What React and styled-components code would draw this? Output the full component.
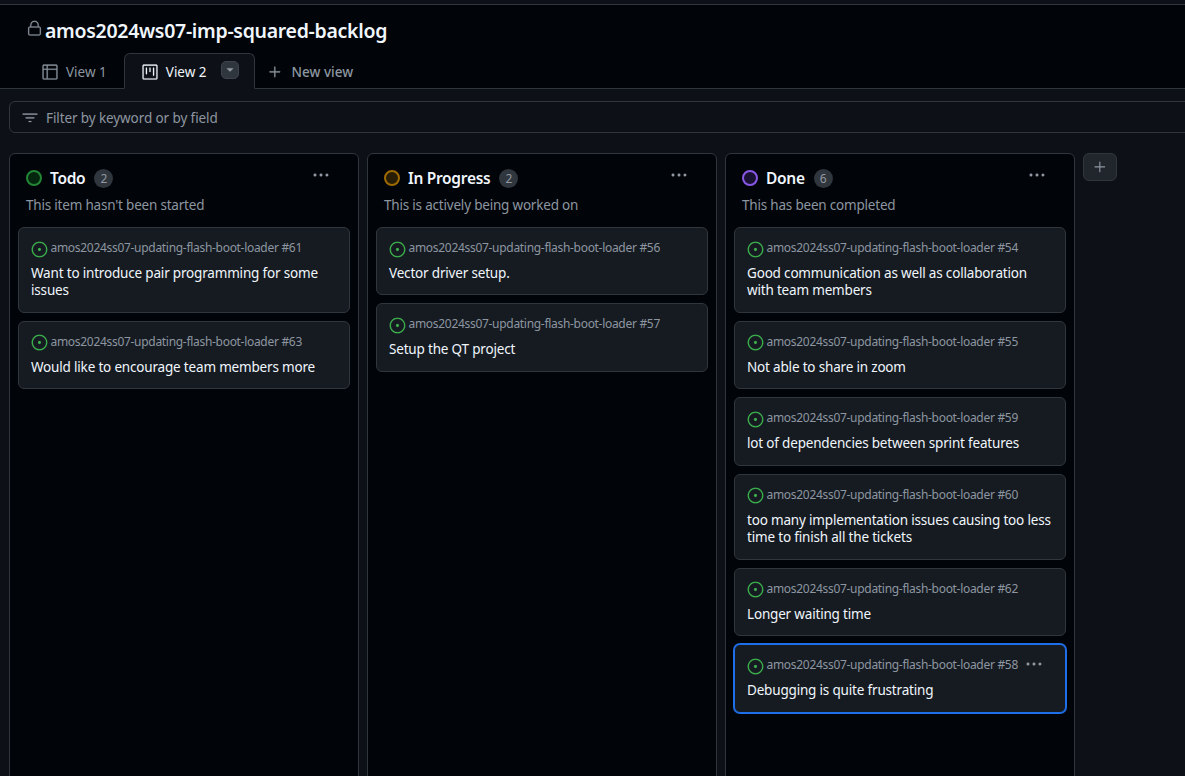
import React from 'react';
import styled, { createGlobalStyle } from 'styled-components';
import { GoLock, GoTable, GoProject, GoTriangleDown, GoPlus, GoKebabHorizontal, GoFilter, GoIssueOpened } from 'react-icons/go';

const Global = createGlobalStyle`
  html, body { margin: 0; padding: 0; height: 776px; overflow: hidden; background: #0d1117; }
  body { font-family: "Noto Sans", "Open Sans", sans-serif; color: #e6edf3; }
`;
const Page = styled.div`width: 1185px; height: 776px; overflow: hidden; display: flex; flex-direction: column;`;
const Header = styled.header`
  box-sizing: border-box; background: #010409; margin-top: 4px; height: 85px;
  border-top: 1px solid #30363d; border-bottom: 1px solid #30363d;
  display: flex; flex-direction: column; padding-left: 26px; flex: none;
  svg { stroke: currentColor; stroke-width: 0.3px; }
`;
const TitleRow = styled.div`display: flex; align-items: center; height: 50px; gap: 2px; padding-top: 1px; box-sizing: border-box; color: #8d96a0;
  svg { margin-top: -3px; }
`;
const Title = styled.h1`margin: 0; font-size: 19.5px; font-weight: 600; color: #f0f6fc; letter-spacing: -0.3px;`;
const Tabs = styled.nav`display: flex; align-items: stretch; height: 35px; margin-top: -1px; margin-left: -4px;`;
const Tab = styled.div`
  display: flex; align-items: center; gap: 7px; font-size: 13.5px; box-sizing: border-box; height: 36px; padding-top: 1px;
  padding-left: 19px; padding-right: 17px; color: #8d96a0;
  ${p => p.$active && `background:#0d1117;border:1px solid #30363d;border-bottom-color:#0d1117;border-radius:6px 6px 0 0;color:#f0f6fc;padding-left:16px;padding-right:15px;`}
  ${p => p.$new && 'font-weight:500;padding-left:11px;gap:8px;'}
`;
const TabCaret = styled.span`
  width: 18px; height: 18px; border-radius: 5px; background: #30363d; border: 1px solid #3d444d; box-sizing: border-box;
  display: flex; align-items: center; justify-content: center; color: #9198a1; margin-left: 7px; margin-top: -3px;
`;
const FilterBar = styled.div`
  margin: 12px -20px 0 9px; height: 32px; box-sizing: border-box; flex: none;
  border: 1px solid #30363d; border-radius: 6px; display: flex; align-items: center; gap: 7px;
  padding: 1px 0 0 11px; font-size: 13.5px; color: #8d96a0; letter-spacing: -0.1px;
  svg { stroke: currentColor; stroke-width: 0.3px; }
`;
const Board = styled.main`display: flex; gap: 8px; padding: 20px 0 0 9px; align-items: flex-start;`;
const Column = styled.section`
  width: 350px; height: 700px; box-sizing: border-box; flex: none; background: #010409;
  border: 1px solid #30363d; border-radius: 6px; padding: 0 8px;
`;
const ColumnHead = styled.div`display: flex; align-items: center; height: 42px; box-sizing: border-box; padding: 6px 0 0 8px;`;
const Status = styled.span`
  width: 16px; height: 16px; box-sizing: border-box; border-radius: 50%; flex: none;
  border: 2px solid ${p => p.$c}; background: ${p => p.$bg}; margin-right: 8px;
`;
const ColumnTitle = styled.h2`margin: 0; font-size: 15.5px; font-weight: 600; color: #f0f6fc; letter-spacing: -0.3px;`;
const Count = styled.span`
  width: 19px; height: 19px; border-radius: 50%; background: #30363d; color: #9198a1;
  font-size: 12px; display: flex; align-items: center; justify-content: center; margin-left: 9px;
`;
const Kebab = styled.span`margin-left: auto; margin-right: 20px; margin-top: -6px; color: #9198a1; display: flex;`;
const Desc = styled.p`margin: 0 0 13px 8px; font-size: 13.5px; line-height: 18px; color: #8d96a0; letter-spacing: -0.2px;`;
const Cards = styled.div`display: flex; flex-direction: column; gap: 8px;`;
const Card = styled.article`
  background: #161b22; border: 1px solid #30363d; border-radius: 6px; box-sizing: border-box;
  padding: 9px 10px 12.2px 12px; width: 332px;
  ${p => p.$focus && 'border-color:#1f6feb;box-shadow:0 0 0 1px #1f6feb;'}
`;
const Meta = styled.div`display: flex; align-items: center; height: 24px; gap: 3px; font-size: 12px; color: #8d96a0; margin-bottom: 3.75px; white-space: nowrap; letter-spacing: -0.3px;
  & > svg { flex: none; margin-left: -0.5px; stroke: #3fb950; stroke-width: 0.3px; }
`;
const MetaText = styled.span`margin-top: -3px;`;
const CardTitle = styled.div`font-size: 13.5px; line-height: 17.5px; color: #f0f6fc; letter-spacing: -0.18px;`;
const CardKebab = styled.span`margin-left: 4px; color: #9198a1; display: flex; flex: none; margin-top: -4px;`;
const AddColumn = styled.button`
  width: 34px; height: 28px; padding: 0; background: #21262d; border: 1px solid #30363d; border-radius: 6px;
  color: #8d96a0; display: flex; align-items: center; justify-content: center;
`;

const columns = [
  { name: 'Todo', c: '#238636', bg: '#04260f', desc: "This item hasn't been started", cards: [
    [61, 'Want to introduce pair programming for some issues'],
    [63, 'Would like to encourage team members more'],
  ]},
  { name: 'In Progress', c: '#9e6a03', bg: '#271d04', desc: 'This is actively being worked on', cards: [
    [56, 'Vector driver setup.'],
    [57, 'Setup the QT project'],
  ]},
  { name: 'Done', c: '#8957e5', bg: '#1a1233', desc: 'This has been completed', cards: [
    [54, 'Good communication as well as collaboration with team members'],
    [55, 'Not able to share in zoom'],
    [59, 'lot of dependencies between sprint features'],
    [60, 'too many implementation issues causing too less time to finish all the tickets'],
    [62, 'Longer waiting time'],
    [58, 'Debugging is quite frustrating', true],
  ]},
];

export default function App() {
  return (
    <Page>
      <Global />
      <Header>
        <TitleRow><GoLock size={17} /><Title>amos2024ws07-imp-squared-backlog</Title></TitleRow>
        <Tabs>
          <Tab><GoTable size={18} />View 1</Tab>
          <Tab $active><GoProject size={18} />View 2<TabCaret><GoTriangleDown size={12} /></TabCaret></Tab>
          <Tab $new><GoPlus size={18} />New view</Tab>
        </Tabs>
      </Header>
      <FilterBar><GoFilter size={18} />Filter by keyword or by field</FilterBar>
      <Board>
        {columns.map(col => (
          <Column key={col.name}>
            <ColumnHead>
              <Status $c={col.c} $bg={col.bg} />
              <ColumnTitle>{col.name}</ColumnTitle>
              <Count>{col.cards.length}</Count>
              <Kebab><GoKebabHorizontal size={18} /></Kebab>
            </ColumnHead>
            <Desc>{col.desc}</Desc>
            <Cards>
              {col.cards.map(([n, t, focus]) => (
                <Card key={n} $focus={focus}>
                  <Meta>
                    <GoIssueOpened size={17} color="#3fb950" />
                    <MetaText>amos2024ss07-updating-flash-boot-loader #{n}</MetaText>
                    {focus && <CardKebab><GoKebabHorizontal size={18} /></CardKebab>}
                  </Meta>
                  <CardTitle>{t}</CardTitle>
                </Card>
              ))}
            </Cards>
          </Column>
        ))}
        <AddColumn aria-label="Add column"><GoPlus size={18} /></AddColumn>
      </Board>
    </Page>
  );
}
